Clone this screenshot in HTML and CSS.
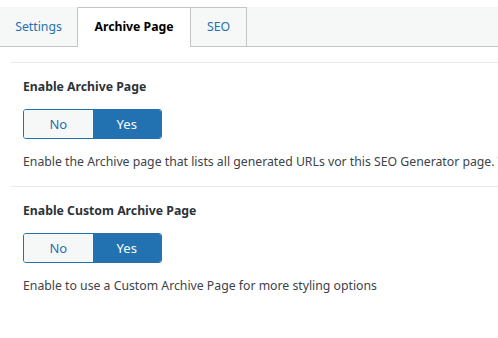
FILE: index.html
```html
<!DOCTYPE html>
<html>
<head>
<meta charset="utf-8">
<link rel="stylesheet" href="styles.css">
</head>
<body>
<div class="page">
  <nav class="tabs">
    <a class="tab tab-settings">Settings</a>
    <a class="tab tab-archive active">Archive Page</a>
    <a class="tab tab-seo">SEO</a>
  </nav>
  <div class="panel">
    <div class="field">
      <div class="label">Enable Archive Page</div>
      <div class="toggle">
        <span class="opt opt-no">No</span>
        <span class="opt opt-yes">Yes</span>
      </div>
      <div class="desc">Enable the Archive page that lists all generated URLs vor this SEO Generator page. The</div>
    </div>
    <div class="field">
      <div class="label">Enable Custom Archive Page</div>
      <div class="toggle">
        <span class="opt opt-no">No</span>
        <span class="opt opt-yes">Yes</span>
      </div>
      <div class="desc">Enable to use a Custom Archive Page for more styling options</div>
    </div>
  </div>
</div>
</body>
</html>
```
FILE: styles.css
```css
html, body {
  margin: 0;
  padding: 0;
  background: #ffffff;
  overflow: hidden;
}
body {
  font-family: "Noto Sans", "Open Sans", sans-serif;
  font-size: 12.25px;
  color: #3c434a;
}
.page {
  width: 498px;
  height: 338px;
  overflow: hidden;
  padding-top: 7px;
  box-sizing: border-box;
}
.tabs {
  display: flex;
  height: 39px;
  background: #f6f7f7;
  border-bottom: 1px solid #c3c4c7;
}
.tab {
  display: flex;
  align-items: center;
  justify-content: center;
  box-sizing: border-box;
  height: 39px;
  padding-bottom: 1px;
  color: #2271b1;
  background: #f6f7f7;
  border-right: 1px solid #c3c4c7;
  border-top: 1px solid #c3c4c7;
  font-size: 12.25px;
  cursor: pointer;
}
.tab-settings {
  width: 78px;
  border-top-color: transparent;
}
.tab-archive {
  width: 113px;
}
.tab-seo {
  width: 56px;
}
.tab.active {
  background: #ffffff;
  color: #000000;
  font-weight: 700;
  height: 40px;
  padding-bottom: 2px;
  margin-bottom: -1px;
}
.panel {
  margin: 15px 0 0 11px;
}
.field {
  border-top: 1px solid #ebebeb;
  padding: 15px 0 15px 12px;
}
.label {
  font-weight: 700;
  line-height: 18px;
  color: #2c3338;
}
.toggle {
  display: flex;
  width: 139px;
  height: 30px;
  margin-top: 13px;
  border: 1px solid #2271b1;
  border-radius: 3px;
  box-sizing: border-box;
  overflow: hidden;
}
.opt {
  flex: 1;
  display: flex;
  align-items: center;
  justify-content: center;
  font-size: 13px;
}
.opt-no {
  background: #f6f7f7;
  color: #2271b1;
}
.opt-yes {
  background: #2271b1;
  color: #ffffff;
}
.desc {
  margin-top: 14px;
  line-height: 18px;
  white-space: nowrap;
}
```
